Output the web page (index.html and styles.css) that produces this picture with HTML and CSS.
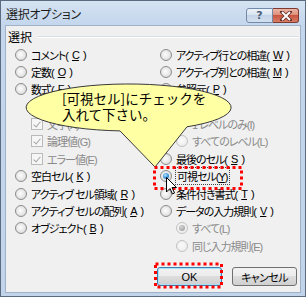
FILE: index.html
```html
<!DOCTYPE html>
<html lang="ja">
<head>
    <meta charset="UTF-8">
    <title>選択オプション</title>
    <link rel="stylesheet" href="styles.css">
</head>
<body>
    <!-- ダイアログ本体 -->
    <div class="window">
        <div class="titlebar">
            <span class="title">選択オプション</span>
            <div class="caption">
                <span class="cap help">?</span>
                <span class="cap close">
                    <svg width="12" height="10" viewBox="0 0 12 10"><path d="M2 1 L10 9 M10 1 L2 9" stroke="#5a2a20" stroke-width="3.4" stroke-linecap="square"/><path d="M2 1 L10 9 M10 1 L2 9" stroke="#fff" stroke-width="2"/></svg>
                </span>
            </div>
        </div>

        <div class="client">
            <div class="group-head"><span>選択</span><i class="rule"></i></div>

            <div class="options">
                <div class="col left">
                    <div class="opt"><i class="radio"></i>コメント(<u>C</u>)</div>
                    <div class="opt"><i class="radio"></i>定数(<u>O</u>)</div>
                    <div class="opt"><i class="radio"></i>数式(<u>F</u>)</div>
                    <div class="opt sub off"><i class="check"></i>数値(U)</div>
                    <div class="opt sub off"><i class="check"></i>文字(X)</div>
                    <div class="opt sub off"><i class="check"></i>論理値(G)</div>
                    <div class="opt sub off"><i class="check"></i>エラー値(E)</div>
                    <div class="opt"><i class="radio"></i>空白セル(<u>K</u>)</div>
                    <div class="opt"><i class="radio"></i>アクティブ セル領域(<u>R</u>)</div>
                    <div class="opt"><i class="radio"></i>アクティブ セルの配列(<u>A</u>)</div>
                    <div class="opt"><i class="radio"></i>オブジェクト(<u>B</u>)</div>
                </div>
                <div class="col right">
                    <div class="opt"><i class="radio"></i>アクティブ行との相違(<u>W</u>)</div>
                    <div class="opt"><i class="radio"></i>アクティブ列との相違(<u>M</u>)</div>
                    <div class="opt"><i class="radio"></i>参照元(<u>P</u>)</div>
                    <div class="opt"><i class="radio"></i>参照先(<u>D</u>)</div>
                    <div class="opt sub off"><i class="radio"></i>1 レベルのみ(I)</div>
                    <div class="opt sub off"><i class="radio"></i>すべてのレベル(L)</div>
                    <div class="opt"><i class="radio"></i>最後のセル(<u>S</u>)</div>
                    <div class="opt"><i class="radio on"></i><span class="focus">可視セル(<u>Y</u>)</span></div>
                    <div class="opt"><i class="radio"></i>条件付き書式(<u>T</u>)</div>
                    <div class="opt"><i class="radio"></i>データの入力規則(<u>V</u>)</div>
                    <div class="opt sub off"><i class="radio on"></i>すべて(L)</div>
                    <div class="opt sub off"><i class="radio"></i>同じ入力規則(E)</div>
                </div>
            </div>

            <div class="buttons">
                <button class="btn default">OK</button>
                <button class="btn">キャンセル</button>
            </div>
        </div>
    </div>

    <!-- 吹き出し -->
    <div class="callout">
        <svg width="210" height="90" viewBox="0 0 210 90">
            <path d="M95 47.9 A102.5 23.5 0 1 1 162 43.8 L130 84 Z" fill="#ffffa4" stroke="#3a3a3a" stroke-width="1"/>
        </svg>
        <div class="callout-text">[可視セル]にチェックを<br>入れて下さい。</div>
    </div>

    <!-- 赤枠とカーソル -->
    <svg class="marks" width="306" height="297" viewBox="0 0 306 297">
        <rect x="154.5" y="167.5" width="87" height="21" fill="none" stroke="#f00" stroke-width="3" stroke-dasharray="3 3"/>
        <rect x="155.5" y="264" width="66" height="23" fill="none" stroke="#f00" stroke-width="3" stroke-dasharray="3 3"/>
        <path d="M166.5 177.5 L166.5 192 L170 188.5 L172.5 194 L174.5 193 L172 187.5 L176.5 187.5 Z" fill="#fff" stroke="#000" stroke-width="1"/>
    </svg>
</body>
</html>
```

FILE: styles.css
```css
body {
    margin: 0;
    font-family: "Noto Sans CJK JP", "Noto Sans", sans-serif;
    text-autospace: no-autospace;
}
.window {
    width: 306px;
    height: 297px;
    box-sizing: border-box;
    border: 1px solid #5b6b80;
    background: linear-gradient(#d6e3f2, #c3d6ec 24px, #c1d4ea);
    display: flex;
    flex-direction: column;
}
.titlebar {
    height: 24px;
    display: flex;
    align-items: center;
    padding-left: 5px;
}
.title {
    flex: 1;
    font-size: 12px;
    font-feature-settings: "palt";
    letter-spacing: -0.3px;
    color: #1a1a1a;
}
.caption {
    display: flex;
    align-self: flex-start;
    margin-top: 7px;
    margin-right: 6px;
}
.cap {
    height: 15px;
    box-sizing: border-box;
    display: flex;
    align-items: center;
    justify-content: center;
}
.help {
    width: 27px;
    border: 1px solid #7289a8;
    border-radius: 3px 0 0 3px;
    background: linear-gradient(#eef3fa, #d6e2f0 50%, #c5d5e9 50%, #d3e0ef);
    font: bold 11px "DejaVu Sans", sans-serif;
    color: #4d5e78;
}
.close {
    width: 26px;
    border: 1px solid #7d3a2f;
    border-left: none;
    border-radius: 0 3px 3px 0;
    background: linear-gradient(#ecb4a6, #dc8b76 50%, #c9553e 50%, #d77d66);
}
.client {
    flex: 1;
    margin: 0 4px 3px 4px;
    border: 1px solid #9fb2c9;
    background: #f0f0f0;
    display: flex;
    flex-direction: column;
}
.group-head {
    height: 20px;
    display: flex;
    align-items: center;
    padding: 0 2px 0 2px;
    font-size: 12px;
    font-feature-settings: "palt";
}
.rule {
    flex: 1;
    height: 1px;
    margin-left: 6px;
    background: #d5dfe5;
    box-shadow: 0 1px #fff;
}
.options {
    display: flex;
}
.col.left {
    width: 154px;
}
.opt {
    height: 17.36px;
    display: flex;
    align-items: center;
    gap: 4px;
    font-family: "Liberation Sans", "Noto Sans CJK JP", sans-serif;
    font-size: 11px;
    font-feature-settings: "palt";
    letter-spacing: -1px;
    white-space: nowrap;
    color: #000;
}
.left .opt {
    padding-left: 9px;
}
.left .opt.sub {
    padding-left: 25px;
}
.right .opt.sub {
    padding-left: 16px;
}
.opt.off {
    color: #8a8a8a;
}
.radio {
    width: 12px;
    height: 12px;
    box-sizing: border-box;
    border-radius: 50%;
    border: 1px solid #8c8c8c;
    background: radial-gradient(circle at 45% 45%, #fdfdfd 0, #e6e6e6 55%, #cdcdcd 100%);
    display: flex;
    align-items: center;
    justify-content: center;
    flex: none;
}
.off .radio {
    border-color: #c2c2c2;
    background: radial-gradient(circle at 45% 45%, #fafafa 0, #f0f0f0 60%, #e4e4e4 100%);
}
.radio.on::after {
    content: "";
    width: 6px;
    height: 6px;
    border-radius: 50%;
    background: radial-gradient(circle at 40% 35%, #b6e4ff 0, #3d97dc 50%, #1664ad 100%);
}
.off .radio.on::after {
    background: radial-gradient(circle at 40% 35%, #d6d6d6 0, #a4a4a4 70%);
}
.check {
    width: 12px;
    height: 12px;
    box-sizing: border-box;
    border: 1px solid #bababa;
    background: #f6f6f6;
    flex: none;
    display: flex;
    justify-content: center;
}
.check::after {
    content: "";
    width: 3px;
    height: 6px;
    margin-top: 1px;
    border-right: 1.5px solid #a8a8a8;
    border-bottom: 1.5px solid #a8a8a8;
    transform: rotate(40deg);
}
.focus {
    outline: 1px dotted #444;
    outline-offset: 0;
    padding: 0 2px 0 1px;
}
.buttons {
    display: flex;
    justify-content: flex-end;
    gap: 10px;
    padding-right: 3px;
    margin-top: 12.7px;
}
.btn {
    width: 65px;
    height: 19px;
    padding: 0;
    border: 1px solid #707070;
    border-radius: 3px;
    background: linear-gradient(#f2f2f2, #ebebeb 50%, #dddddd 50%, #cfcfcf);
    font-family: "Liberation Sans", "Noto Sans CJK JP", sans-serif;
    font-size: 11px;
    font-feature-settings: "palt";
    letter-spacing: -0.6px;
    color: #000;
}
.btn.default {
    border-color: #3c7fb1;
    box-shadow: inset 0 0 0 1px #a6e2fa;
    letter-spacing: 0;
}
.callout {
    position: absolute;
    left: 25px;
    top: 83px;
    width: 210px;
    height: 90px;
}
.callout svg {
    display: block;
}
.callout-text {
    position: absolute;
    left: 37px;
    top: 7px;
    font-size: 13.5px;
    line-height: 16px;
    white-space: nowrap;
    color: #000;
}
.marks {
    position: absolute;
    left: 0;
    top: 0;
    pointer-events: none;
}
```
